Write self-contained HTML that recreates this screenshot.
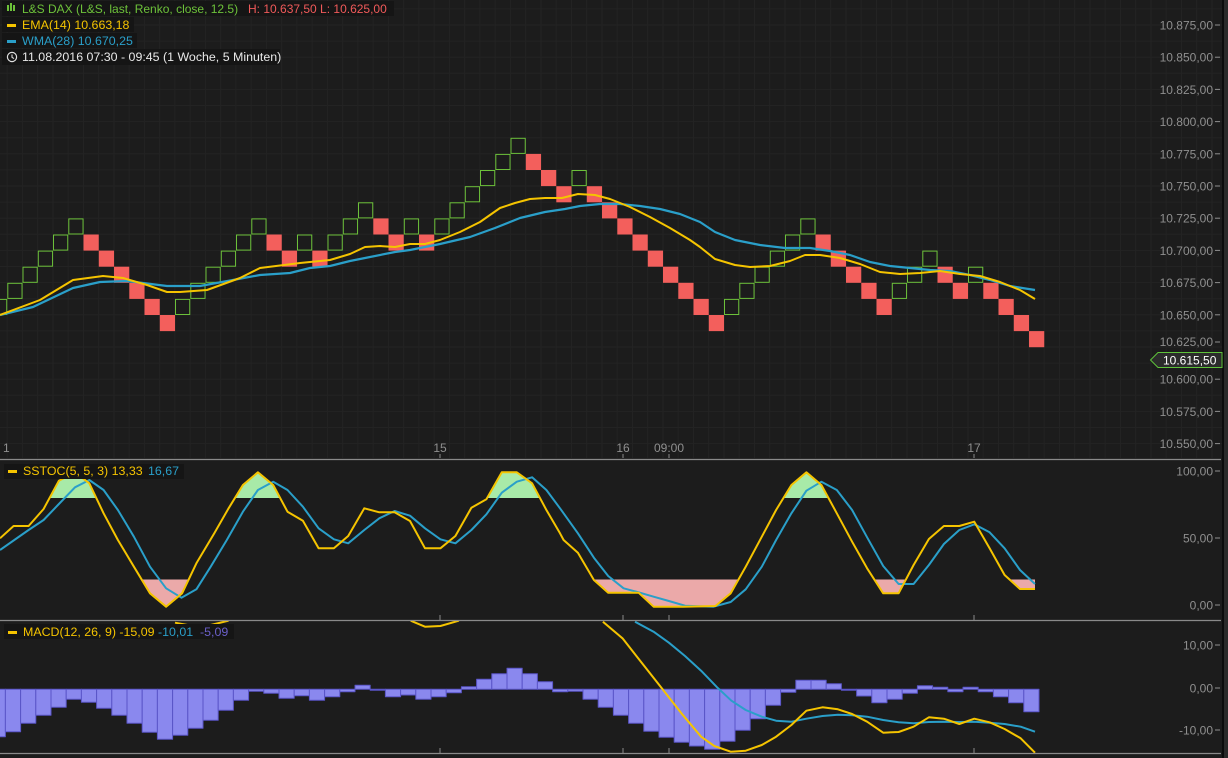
<!DOCTYPE html>
<html><head><meta charset="utf-8">
<style>
html,body{margin:0;padding:0;background:#1c1c1c;overflow:hidden}
svg{display:block;font-family:"Liberation Sans",sans-serif}
</style></head>
<body>
<svg id="c" width="1228" height="758" viewBox="0 0 1228 758" xmlns="http://www.w3.org/2000/svg">
<rect width="1228" height="758" fill="#1c1c1c"/>
<g id="grid" stroke="#232323" stroke-width="1"></g>
<g id="bricks"></g>
<g id="lines" fill="none" stroke-width="2" stroke-linejoin="round"></g>
<g id="ax" font-size="12" fill="#8f8f8f"></g>
<rect x="1222" y="0" width="2" height="758" fill="#0c0c0c"/>
<rect x="1224" y="0" width="4" height="758" fill="#2a2a2a"/>
<path d="M1150.5 360 L1158 352.5 L1222 352.5 L1222 367.5 L1158 367.5 Z" fill="#2b2b2b" stroke="#5ec23a" stroke-width="1"/>
<text x="1163" y="364.5" font-size="12" fill="#ffffff">10.615,50</text>
<rect x="2" y="1" width="392" height="15" fill="#151515"/>
<rect x="2" y="17" width="132" height="15" fill="#151515"/>
<rect x="2" y="33" width="135" height="15" fill="#151515"/>
<rect x="2" y="49" width="278" height="16" fill="#151515"/>
<g font-size="12.4">
<rect x="7" y="5" width="2" height="6" fill="#6dc23a"/><rect x="10" y="3" width="2" height="8" fill="#6dc23a"/><rect x="13" y="5" width="2" height="6" fill="#6dc23a"/>
<text x="22" y="13" fill="#6dc23a" font-size="12">L&amp;S DAX (L&amp;S, last, Renko, close, 12.5)</text>
<text x="248" y="13" fill="#f05a5a" font-size="12">H: 10.637,50  L: 10.625,00</text>
<rect x="7" y="24" width="9" height="3" fill="#f5c400"/>
<text x="22" y="29" fill="#f5c400">EMA(14)  10.663,18</text>
<rect x="7" y="40" width="9" height="3" fill="#2a9fc9"/>
<text x="22" y="45" fill="#2a9fc9">WMA(28)  10.670,25</text>
<circle cx="12" cy="57" r="4.6" fill="none" stroke="#e0e0e0" stroke-width="1.2"/><path d="M12 54.5 V57.3 L14 58.6" fill="none" stroke="#e0e0e0" stroke-width="1.1"/>
<text x="22" y="61" fill="#e8e8e8">11.08.2016 07:30 - 09:45 (1 Woche, 5 Minuten)</text>
<rect x="4" y="464" width="180" height="15" fill="#151515"/>
<rect x="8" y="470" width="9" height="3" fill="#f5c400"/>
<text x="23" y="475" fill="#f5c400">SSTOC(5, 5, 3)  13,33</text>
<text x="148" y="475" fill="#2a9fc9">16,67</text>
<rect x="4" y="624" width="230" height="15" fill="#151515"/>
<rect x="8" y="631" width="9" height="3" fill="#f5c400"/>
<text x="23" y="636" fill="#f5c400">MACD(12, 26, 9)  -15,09</text>
<text x="158" y="636" fill="#2a9fc9">-10,01</text>
<text x="200" y="636" fill="#6a5fc8">-5,09</text>
</g>
</svg>
<script>
var NS="http://www.w3.org/2000/svg";
function el(p,t,a){var e=document.createElementNS(NS,t);for(var k in a)e.setAttribute(k,a[k]);p.appendChild(e);return e;}
var g=document.getElementById('grid'),b=document.getElementById('bricks'),L=document.getElementById('lines'),ax=document.getElementById('ax');
for(var y=25-16.1*1;y<458;y+=16.1){if(y>0)el(g,'line',{x1:0,x2:1222,y1:y.toFixed(1),y2:y.toFixed(1)});}
for(var x=7.2;x<1222;x+=15.25){el(g,'line',{x1:x.toFixed(1),x2:x.toFixed(1),y1:0,y2:458});}
[459,620,753].forEach(function(y){el(ax,'line',{x1:0,x2:1221,y1:y+0.5,y2:y+0.5,stroke:'#8a8a8a','stroke-width':1.2});});
var pl=['10.875,00','10.850,00','10.825,00','10.800,00','10.775,00','10.750,00','10.725,00','10.700,00','10.675,00','10.650,00','10.625,00','10.600,00','10.575,00','10.550,00'];
pl.forEach(function(t,i){var y=25+32.2*i;if(i==10)return;var e=el(ax,'text',{x:1213,y:y+4.5,'text-anchor':'end'});e.textContent=t;el(ax,'line',{x1:1215,x2:1220,y1:y,y2:y,stroke:'#8f8f8f'});});
(function(){var y=25+32.2*10;var e=el(ax,'text',{x:1213,y:y-1,'text-anchor':'end'});e.textContent=pl[10];el(ax,'line',{x1:1215,x2:1220,y1:y-5,y2:y-5,stroke:'#8f8f8f'});})();
[['100,00',471],['50,00',538],['0,00',605],['10,00',645],['0,00',688],['-10,00',730]].forEach(function(a){var e=el(ax,'text',{x:1213,y:a[1]+4.5,'text-anchor':'end'});e.textContent=a[0];el(ax,'line',{x1:1215,x2:1220,y1:a[1],y2:a[1],stroke:'#8f8f8f'});});
[['1',3],['15',440],['16',623],['09:00',669],['17',974]].forEach(function(a){var e=el(ax,'text',{x:a[1],y:452,'text-anchor':a[0]=='1'?'start':'middle'});e.textContent=a[0];
 if(a[0]!='1'){[[454,458],[615,620],[748,753]].forEach(function(r){el(ax,'line',{x1:a[1],x2:a[1],y1:r[0],y2:r[1],stroke:'#8a8a8a'});});}});
var seq="g8 g9 g10 g11 g12 g13 r12 r11 r10 r9 r8 r7 g8 g9 g10 g11 g12 g13 r12 r11 g12 r11 g12 g13 g14 r13 r12 g13 r12 g13 g14 g15 g16 g17 g18 r17 r16 r15 g16 r15 r14 r13 r12 r11 r10 r9 r8 r7 g8 g9 g10 g11 g12 g13 r12 r11 r10 r9 r8 g9 g10 g11 r10 r9 g10 r9 r8 r7 r6".split(' ');
seq.forEach(function(s,i){var lv=+s.slice(1),x=-8+15.25*i,y=427.8-16.11*lv;
 if(s[0]=='g')el(b,'rect',{x:(x+0.5).toFixed(1),y:(y+0.5).toFixed(1),width:14.25,height:15.1,fill:'none',stroke:'#6cc13a','stroke-width':1});
 else el(b,'rect',{x:x.toFixed(1),y:y.toFixed(1),width:15.25,height:16.11,fill:'#f35f5c'});});
function pts(a){return a.map(function(p){return p[0].toFixed(1)+','+p[1].toFixed(1)}).join(' ');}
function line(a,c,w){el(L,'polyline',{points:pts(a),stroke:c,'stroke-width':w||2});}
var ema=[[0,315],[40,300],[73,280],[103,276],[123,278],[147,285],[167,292],[180,292],[207,290],[240,278],[260,268],[300,263],[330,260],[350,254],[365,247],[380,246],[395,247],[410,244],[425,244],[440,240],[460,232],[480,222],[500,208],[515,203],[530,199],[545,198],[562,198],[578,194],[595,195],[610,199],[630,207],[650,217],[670,228],[690,240],[700,247],[715,259],[735,265],[750,267],[770,266],[790,261],[805,255],[820,255],[840,258],[860,264],[880,272],[900,274],[920,273],[940,271],[960,274],[980,276],[1000,282],[1020,290],[1035,299]];
var wma=[[0,315],[33,307],[73,288],[100,282],[127,281],[167,286],[200,286],[233,280],[260,275],[290,273],[310,268],[330,266],[350,261],[365,258],[395,252],[410,250],[440,244],[470,237],[495,228],[520,218],[545,212],[565,209],[580,206],[600,204],[620,204],[640,206],[660,209],[680,214],[700,222],[715,232],[735,240],[760,245],[785,248],[810,248],[830,251],[850,255],[870,262],[890,266],[910,268],[930,270],[950,271],[970,275],[990,280],[1010,286],[1035,290]];
line(wma,'#2a9fc9',2.2);line(ema,'#f5c400',2);
function cv(a,off){return a.map(function(p){return [off+p[0]/2.8,430+p[1]/3];});}
var sy=cv([[0,325],[38,288],[80,288],[122,237],[165,152],[210,127],[250,160],[290,250],[330,330],[375,410],[420,490],[465,530],[510,490],[550,400],[600,310],[640,235],[680,165],[722,127],[765,165],[805,245],[848,272],[892,355],[935,355],[975,318],[1020,235],[1062,247],[1105,247],[1148,273],[1190,355],[1233,355],[1275,318],[1320,233],[1362,208],[1405,127],[1447,127],[1490,160],[1530,240]],0)
 .concat(cv([[0,310],[10,330],[50,368],[95,450],[135,488],[220,488],[262,530],[345,530],[435,528],[478,490],[520,410],[565,320],[605,240],[648,165],[690,127],[732,165],[775,250],[818,335],[860,415],[905,490],[948,490],[990,405],[1033,327],[1075,288],[1118,288],[1160,275],[1203,355],[1245,435],[1288,477],[1330,477]],560));
var sb=cv([[0,360],[40,330],[80,300],[122,270],[165,222],[210,172],[250,150],[290,180],[330,240],[375,320],[420,410],[465,475],[508,503],[550,478],[590,410],[635,330],[680,245],[722,180],[765,155],[805,180],[848,230],[892,295],[935,328],[975,340],[1020,300],[1062,265],[1105,243],[1148,257],[1190,295],[1233,328],[1275,340],[1320,300],[1362,253],[1405,188],[1447,155],[1490,142],[1530,180]],0)
 .concat(cv([[0,235],[50,310],[95,383],[135,438],[178,475],[220,487],[262,500],[305,513],[350,527],[430,530],[478,516],[520,478],[565,410],[605,330],[648,250],[690,182],[732,155],[775,180],[818,240],[860,322],[905,408],[948,462],[990,462],[1033,405],[1075,342],[1118,300],[1160,283],[1203,307],[1245,355],[1288,420],[1330,462]],560));
var defs=el(document.getElementById('c'),'defs',{});
var c1=el(defs,'clipPath',{id:'up'});el(c1,'rect',{x:0,y:460,width:1100,height:38});
var c2=el(defs,'clipPath',{id:'dn'});el(c2,'rect',{x:0,y:579.5,width:1100,height:40});
var last=sy[sy.length-1][0];
el(L,'polygon',{points:pts(sy.concat([[last,498],[0,498]])),fill:'#a8eaa8',stroke:'none','clip-path':'url(#up)'});
el(L,'polygon',{points:pts(sy.concat([[last,579.5],[0,579.5]])),fill:'#eba9a9',stroke:'none','clip-path':'url(#dn)'});
var cl=el(defs,'clipPath',{id:'p2'});el(cl,'rect',{x:0,y:460,width:1221,height:160});
var g2=el(L,'g',{'clip-path':'url(#p2)'});
el(g2,'polyline',{points:pts(sb),stroke:'#2a9fc9','stroke-width':2});
el(g2,'polyline',{points:pts(sy),stroke:'#f5c400','stroke-width':2});
var cl3=el(defs,'clipPath',{id:'p3'});el(cl3,'rect',{x:0,y:621,width:1221,height:132});
var g3=el(L,'g',{'clip-path':'url(#p3)'});
var hv=[920,905,880,856,832,808,817,835,856,880,907,928,916,895,871,841,811,784,790,805,797,811,800,785,766,780,800,795,808,800,788,770,748,731,715,731,755,785,784,808,832,856,880,904,922,937,948,958,934,901,866,826,787,751,751,761,778,798,818,808,790,767,772,785,772,785,800,818,845];
var z=689.3;
hv.forEach(function(v,k){var j=k-1,x=5.4+15.2*j,y=430+v/3;var t=Math.min(y,z),h=Math.abs(y-z);if(h<1)h=1;
 el(g3,'rect',{x:x.toFixed(1),y:t.toFixed(1),width:15.2,height:h.toFixed(1),fill:'#8a88ee',stroke:'#5a55c8','stroke-width':1});});
el(g3,'polyline',{points:pts(cv([[490,578],[540,588],[590,585],[640,572]],0)),stroke:'#f5c400','stroke-width':2});
el(g3,'polyline',{points:pts(cv([[1150,572],[1190,590],[1233,588],[1285,572]],0)),stroke:'#f5c400','stroke-width':2});
el(g3,'polyline',{points:pts(cv([[210,575],[262,605],[305,638],[350,678],[395,722],[440,772],[480,812],[520,840],[565,860],[605,872],[648,875],[690,866],[735,858],[778,854],[818,856],[860,860],[905,870],[948,877],[990,880],[1033,876],[1075,875],[1118,876],[1160,875],[1203,878],[1245,882],[1290,890],[1330,905]],560)),stroke:'#2a9fc9','stroke-width':2});
el(g3,'polyline',{points:pts(cv([[120,575],[175,625],[230,700],[285,775],[340,850],[395,920],[432,948],[478,965],[520,962],[565,945],[605,920],[648,885],[690,842],[735,832],[778,838],[818,852],[860,875],[905,908],[948,906],[990,890],[1033,862],[1075,866],[1118,882],[1160,866],[1203,877],[1245,897],[1290,925],[1330,968]],560)),stroke:'#f5c400','stroke-width':2});
</script>
</body></html>
